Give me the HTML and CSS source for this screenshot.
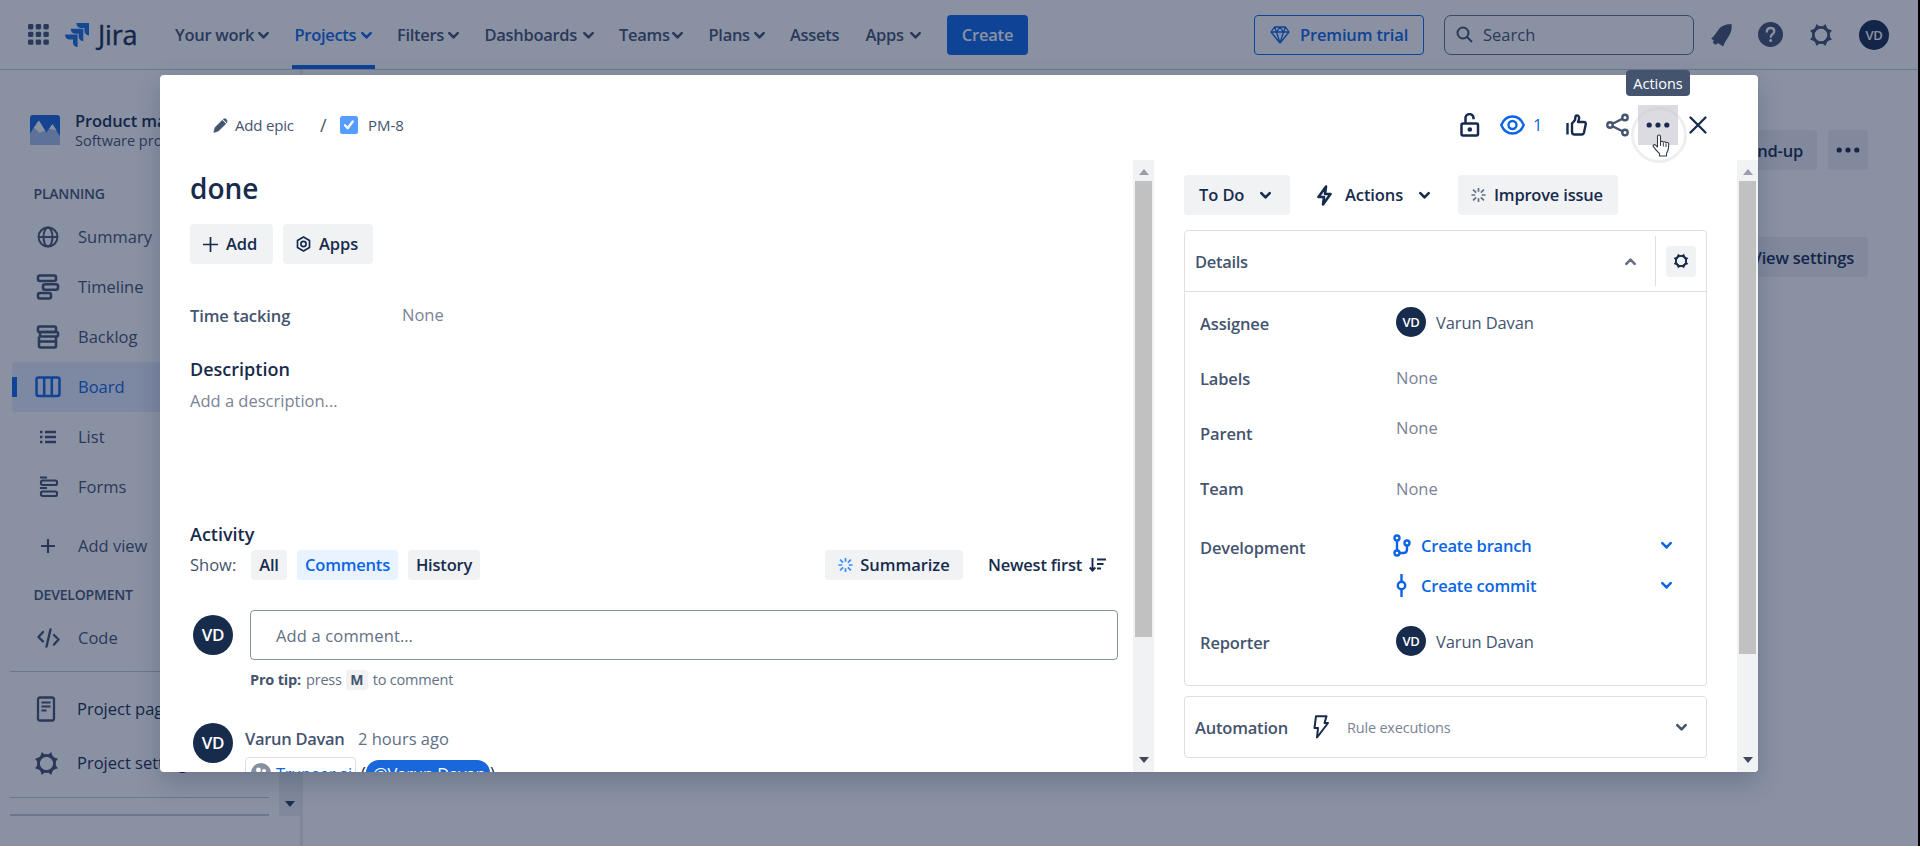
FILE: index.html
```html
<!DOCTYPE html>
<html lang="en">
<head>
    <meta charset="UTF-8">
    <meta name="viewport" content="width=device-width, initial-scale=1.0">
    <title>PM-8 done - Jira</title>
    <link rel="stylesheet" href="styles.css">
</head>
<body>
    <!-- shared icons -->
    <svg class="sprite" width="0" height="0">
        <symbol id="chevron" viewBox="0 0 10 8"><path d="M1.2 1.8 5 5.8l3.8-4" fill="none" stroke="currentColor" stroke-width="2.3" stroke-linecap="round" stroke-linejoin="round"/></symbol>
        <symbol id="gear" viewBox="0 0 24 24"><circle cx="12" cy="12" r="7.8" fill="none" stroke="currentColor" stroke-width="2.6"/><path d="M7.500 1l3 2.500h3l3-2.500 1.500 4 1 1 4 1.500-2.500 3v3l2.500 3-4 1.500-1 1-1.500 4-3-2.500h-3l-3 2.500-1.500-4-1-1-4-1.500 2.500-3v-3l-2.500-3 4-1.500 1-1zM12 5.500a6.500 6.500 0 1 0 0 13 6.500 6.500 0 0 0 0-13z" fill="currentColor" fill-rule="evenodd"/></symbol>
        <symbol id="spark" viewBox="0 0 16 16"><path d="M8 .5v4M8 11.500v4M.5 8h4M11.500 8h4M2.200 2.200l3.300 3.300M10.500 10.500l3.300 3.300M2.200 13.800l3.300-3.300M10.500 5.500l3.300-3.300" stroke="currentColor" stroke-width="1.800"/></symbol>
        <symbol id="dots" viewBox="0 0 24 6"><g fill="currentColor"><circle cx="3.2" cy="3" r="2.6"/><circle cx="12" cy="3" r="2.6"/><circle cx="20.8" cy="3" r="2.6"/></g></symbol>
        <symbol id="tri-up" viewBox="0 0 10 6"><path d="M5 0l5 6H0z" fill="currentColor"/></symbol>
        <symbol id="tri-down" viewBox="0 0 10 6"><path d="M0 0h10L5 6z" fill="currentColor"/></symbol>
    </svg>

    <div class="app">
        <header class="topnav">
            <svg class="switcher" width="21" height="21" viewBox="0 0 21 21" fill="currentColor"><rect width="5.4" height="5.4" rx="1.4"/><rect x="7.7" width="5.4" height="5.4" rx="1.4"/><rect x="15.4" width="5.4" height="5.4" rx="1.4"/><rect y="7.7" width="5.4" height="5.4" rx="1.4"/><rect x="7.7" y="7.7" width="5.4" height="5.4" rx="1.4"/><rect x="15.4" y="7.7" width="5.4" height="5.4" rx="1.4"/><rect y="15.4" width="5.4" height="5.4" rx="1.4"/><rect x="7.7" y="15.4" width="5.4" height="5.4" rx="1.4"/><rect x="15.4" y="15.4" width="5.4" height="5.4" rx="1.4"/></svg>
            <div class="logo">
                <svg width="24" height="24" viewBox="0 0 24 24" fill="#1d6fe0"><path d="M11.4 0H24v12.4c-2.800 0-4.600-1.800-4.600-4.600V5h-2.900c-3 0-5.100-2-5.100-5z"/><path d="M5.700 5.800h12.600v12.400c-2.800 0-4.600-1.800-4.600-4.600v-2.800h-2.900c-3 0-5.100-2-5.100-5z"/><path d="M0 11.600h12.600V24C9.800 24 8 22.200 8 19.400v-2.800H5.100c-3 0-5.100-2-5.100-5z"/></svg>
                <span>Jira</span>
            </div>
            <nav class="menu">
                <a class="w-work">Your work<svg class="chev"><use href="#chevron"/></svg></a>
                <a class="w-projects active">Projects<svg class="chev"><use href="#chevron"/></svg></a>
                <a class="w-filters">Filters<svg class="chev"><use href="#chevron"/></svg></a>
                <a class="w-dash">Dashboards<svg class="chev"><use href="#chevron"/></svg></a>
                <a class="w-teams">Teams<svg class="chev"><use href="#chevron"/></svg></a>
                <a class="w-plans">Plans<svg class="chev"><use href="#chevron"/></svg></a>
                <a class="w-assets">Assets</a>
                <a class="w-apps">Apps<svg class="chev"><use href="#chevron"/></svg></a>
            </nav>
            <button class="create">Create</button>
            <button class="premium">
                <svg width="20" height="18" viewBox="0 0 20 18" fill="none" stroke="currentColor" stroke-width="1.3" stroke-linejoin="round"><path d="M4.500 1h11L19 6l-9 11L1 6zM1 6h18M6.500 6L10 17l3.500-11M4.500 1l2 5L10 1l3.500 5 2-5"/></svg>
                Premium trial
            </button>
            <div class="search">
                <svg width="17" height="17" viewBox="0 0 17 17" fill="none" stroke="currentColor" stroke-width="2"><circle cx="7" cy="7" r="5.500"/><path d="M11 11l5 5"/></svg>
                <span>Search</span>
            </div>
            <div class="nav-icons">
                <svg width="21" height="24" viewBox="0 0 21 24" fill="currentColor"><path d="M20.500 1c-5 .2-10 1.500-12.500 5L2.500 13.500c-.6.800-1.500 1-2 1.700-.2.400 0 .7.500 1L11.500 23c.6.300 1 .1 1.200-.5.300-1 .4-2 1-2.800L18.500 12c2.200-3.500 2.500-7.500 2-11zM2.800 17.500a2.400 2.400 0 1 0 4 2.600z"/></svg>
                <svg width="25" height="25" viewBox="0 0 25 25"><circle cx="12.500" cy="12.500" r="12.500" fill="currentColor"/><path d="M8.800 9.700c0-2.200 1.600-3.700 3.800-3.700s3.700 1.400 3.700 3.300c0 2.800-3.500 2.800-3.500 5.500" fill="none" stroke="#fff" stroke-width="2.300" stroke-linecap="round"/><circle cx="12.700" cy="18.500" r="1.600" fill="#fff"/></svg>
                <svg width="24" height="24"><use href="#gear"/></svg>
                <span class="avatar av-30">VD</span>
            </div>
        </header>

        <div class="page">
            <aside class="sidebar">
                <div class="side-main">
                    <div class="project">
                        <svg width="30" height="30" viewBox="0 0 30 30"><rect width="30" height="30" rx="3" fill="#1868db"/><path d="M0 30V18.500L8 6l3 3.500L16 18l6-8L30 21v9z" fill="#a9c0e8"/><path d="M4 12.500L9 5.500l7 11.500-3-1-3 2-3-2.500zM19 14l3.500-5 4.500 7-3-1.500z" fill="#fff"/></svg>
                        <div>
                            <div class="project-name">Product management</div>
                            <div class="project-type">Software project</div>
                        </div>
                    </div>
                    <h3>PLANNING</h3>
                    <a class="side-item"><span class="ico"><svg width="22" height="22" viewBox="0 0 22 22" fill="none" stroke="currentColor" stroke-width="1.900"><circle cx="11" cy="11" r="9.500"/><ellipse cx="11" cy="11" rx="4.500" ry="9.500"/><path d="M2 11h18"/></svg></span>Summary</a>
                    <a class="side-item"><span class="ico"><svg width="24" height="26" viewBox="0 0 24 26" fill="none" stroke="currentColor" stroke-width="2.600"><rect x="2" y="1.500" width="18" height="5.500" rx="2"/><rect x="7" y="10.300" width="15" height="5.500" rx="2"/><rect x="2" y="19" width="13" height="5.500" rx="2"/></svg></span>Timeline</a>
                    <a class="side-item"><span class="ico"><svg width="24" height="24" viewBox="0 0 24 24" fill="none" stroke="currentColor" stroke-width="2.600"><rect x="2" y="1.500" width="18" height="5.500" rx="1.500"/><rect x="4" y="7" width="18" height="4.500" rx="1.500"/><path d="M3 11.500v9.500a1.500 1.500 0 0 0 1.500 1.500h14A1.500 1.500 0 0 0 20 21v-9.500M3 16.500h17"/></svg></span>Backlog</a>
                    <a class="side-item selected"><span class="ico"><svg width="26" height="22" viewBox="0 0 26 22" fill="none" stroke="currentColor" stroke-width="2.500"><rect x="1.500" y="1.500" width="23" height="18.500" rx="2"/><path d="M9.200 1.500V20M16.800 1.500V20"/></svg></span>Board</a>
                    <a class="side-item"><span class="ico"><svg width="16" height="16" viewBox="0 0 16 16" fill="none" stroke="currentColor" stroke-width="2.400"><path d="M0 3h2.500M5 3h11M0 8h2.500M5 8h11M0 13h2.500M5 13h11"/></svg></span>List</a>
                    <a class="side-item"><span class="ico"><svg width="19" height="22" viewBox="0 0 19 22" fill="none" stroke="currentColor" stroke-width="2.200"><path d="M1 1.500h7M1 12h7"/><rect x="2" y="4.500" width="16" height="4.500" rx="1.500"/><rect x="2" y="15.500" width="16" height="4.500" rx="1.500"/></svg></span>Forms</a>
                    <a class="side-item add-view"><span class="ico"><svg width="16" height="16" viewBox="0 0 16 16" stroke="currentColor" stroke-width="2.200"><path d="M8 1v14M1 8h14"/></svg></span>Add view</a>
                    <h3 class="dev">DEVELOPMENT</h3>
                    <a class="side-item"><span class="ico"><svg width="23" height="20" viewBox="0 0 23 20" fill="none" stroke="currentColor" stroke-width="2.400" stroke-linecap="round" stroke-linejoin="round"><path d="M6 4L1.500 9 6 13.500M13.500 1.500l-4 17M17 7l4.500 4.500L17 16.500"/></svg></span>Code</a>
                    <div class="side-bottom">
                        <a class="side-item dark"><span class="ico"><svg width="20" height="26" viewBox="0 0 20 26" fill="none" stroke="currentColor" stroke-width="2.300"><rect x="2" y="1.500" width="16" height="23" rx="2"/><path d="M5.500 6.500h9M5.500 10.500h9M5.500 14.500h5" stroke-width="2"/></svg></span>Project pages</a>
                        <a class="side-item dark"><span class="ico"><svg width="25" height="25"><use href="#gear"/></svg></span>Project settings</a>
                    </div>
                    <div class="side-end"></div>
                </div>
                <div class="side-scroll"><svg width="10" height="6"><use href="#tri-down"/></svg></div>
            </aside>
            <main class="board">
                <div class="board-row">
                    <button class="btn">Stand-up</button>
                    <button class="btn btn-dots"><svg width="24" height="6"><use href="#dots"/></svg></button>
                </div>
                <div class="board-row second">
                    <button class="btn">View settings</button>
                </div>
            </main>
        </div>
    </div>
    <div class="blanket"></div>
    <div class="screen-edge"></div>

    <section class="modal">
        <div class="modal-head">
            <div class="crumbs">
                <svg width="15" height="17" viewBox="0 0 15 15" fill="currentColor" stroke="currentColor" stroke-width=".6"><path d="M9.300 2.200l3.500 3.500-7.400 7.400-4.600 1.300 1.200-4.800zM10.200 1.300C11 .500 12.300.400 13.200 1.300s1 2.600.500 3.500z"/></svg>
                <span class="c-epic">Add epic</span>
                <span class="c-sep">/</span>
                <svg width="18" height="18" viewBox="0 0 18 18"><rect width="18" height="18" rx="2.500" fill="#579dff"/><path d="M5 9.300l2.700 2.900L12.700 5.500" fill="none" stroke="#fff" stroke-width="2.300" stroke-linecap="round" stroke-linejoin="round"/></svg>
                <span class="c-key">PM-8</span>
            </div>
            <div class="head-actions">
                <svg width="20" height="24" viewBox="0 0 20 24" fill="none" stroke="currentColor" stroke-width="2.500"><rect x="1.500" y="10.500" width="16.500" height="12" rx="1.500"/><path d="M5.500 10.500V5.500a4 4 0 0 1 8-.8v1.500"/><circle cx="9.800" cy="16.500" r="2.300" fill="currentColor" stroke="none"/></svg>
                <svg class="eye" width="25" height="20" viewBox="0 0 25 20" fill="none" stroke="currentColor" stroke-width="2.400"><path d="M1.300 10C3.500 4.500 7.500 1.500 12.500 1.500S21.500 4.500 23.700 10c-2.200 5.500-6.200 8.500-11.200 8.500S3.500 15.500 1.300 10z"/><circle cx="12.500" cy="10" r="4"/></svg>
                <span class="watch">1</span>
                <svg class="thumb" width="21" height="22" viewBox="0 0 21 22" fill="none" stroke="currentColor" stroke-width="2.400" stroke-linejoin="round"><path d="M1.500 9v11.500M6 9.500l3-3.500.500-3.500c.2-1.500 3-1.500 3.500.5.300 1.500-.2 3.500-1 5h6c1.500 0 2 1.200 1.700 2.500l-1.700 8c-.3 1.200-1 2-2.300 2H8.500C7 20.500 6 19.500 6 18z"/></svg>
                <svg class="share" width="24" height="24" viewBox="0 0 24 24" fill="none" stroke="#44546f" stroke-width="2.400"><circle cx="4" cy="12" r="2.700"/><circle cx="19" cy="4.500" r="2.700"/><circle cx="19" cy="19.500" r="2.700"/><path d="M6.500 10.800l10-5M6.500 13.200l10 5"/></svg>
                <button class="more"><svg width="24" height="6"><use href="#dots"/></svg></button>
                <svg class="close" width="18" height="18" viewBox="0 0 18 18" stroke="currentColor" stroke-width="2.300" stroke-linecap="round"><path d="M1.500 1.500l15 15M16.500 1.500l-15 15"/></svg>
            </div>
        </div>

        <div class="modal-body">
            <div class="left">
                <h1>done</h1>
                <div class="toolbar">
                    <button class="btn"><svg width="15" height="15" viewBox="0 0 15 15" stroke="currentColor" stroke-width="1.700"><path d="M7.500 0v15M0 7.500h15"/></svg>Add</button>
                    <button class="btn btn-apps"><svg width="15" height="16" viewBox="0 0 15 16" fill="none" stroke="currentColor" stroke-width="1.700"><path d="M7.500 1l6 3.500v7l-6 3.500-6-3.500v-7z" stroke-linejoin="round"/><circle cx="7.500" cy="8" r="2.600"/></svg>Apps</button>
                </div>
                <div class="time-row"><span class="label">Time tacking</span><span class="none">None</span></div>
                <h2 class="desc-title">Description</h2>
                <div class="desc">Add a description...</div>
                <h2 class="act-title">Activity</h2>
                <div class="show-row">
                    <span class="show">Show:</span>
                    <button class="chip c-all">All</button>
                    <button class="chip c-comments on">Comments</button>
                    <button class="chip c-history">History</button>
                    <button class="chip c-sum"><svg width="15" height="16"><use href="#spark"/></svg>Summarize</button>
                    <span class="newest">Newest first<svg width="17" height="14" viewBox="0 0 17 14" fill="none" stroke="currentColor" stroke-width="1.900"><path d="M3.500 0v12.500M.700 9.500l2.800 3 2.800-3M8 1.500h9M8 6h6.500M8 10.500h4"/></svg></span>
                </div>
                <div class="comment-new">
                    <span class="avatar av-40">VD</span>
                    <div class="comment-input">Add a comment…</div>
                </div>
                <div class="tip"><b>Pro tip:</b><span>press</span><kbd>M</kbd><span>to comment</span></div>
                <div class="comment">
                    <span class="avatar av-40">VD</span>
                    <div>
                        <div class="who"><b>Varun Davan</b><span>2 hours ago</span></div>
                        <div class="mentions">
                            <span class="tag"><svg width="20" height="20" viewBox="0 0 20 20"><circle cx="10" cy="10" r="10" fill="#8590a2"/><g fill="#fff"><circle cx="7.500" cy="7" r="2.400"/><circle cx="13" cy="8" r="1.900"/><path d="M3.500 14c0-4 8-4 8 0z"/></g></svg>Trupeer.ai</span>
                            <span class="paren">(</span><span class="mention">@Varun Davan</span><span>)</span>
                        </div>
                    </div>
                </div>
            </div>
            <div class="scrollbar sb-left">
                <svg class="up" width="10" height="6"><use href="#tri-up"/></svg>
                <div class="sb-thumb"></div>
                <svg class="down" width="10" height="6"><use href="#tri-down"/></svg>
            </div>

            <div class="right">
                <div class="status-row">
                    <button class="btn todo">To Do<svg class="chev"><use href="#chevron"/></svg></button>
                    <button class="act-btn"><svg width="15" height="21" viewBox="0 0 15 21" fill="none" stroke="currentColor" stroke-width="2.600" stroke-linejoin="round"><path d="M9 1.500L1.500 12H7l-1 7.500L13.500 9H8z"/></svg>Actions<svg class="chev"><use href="#chevron"/></svg></button>
                    <button class="btn improve"><svg width="15" height="16"><use href="#spark"/></svg>Improve issue</button>
                </div>
                <div class="details">
                    <div class="details-head">
                        <span>Details</span>
                        <svg class="chev flip"><use href="#chevron"/></svg>
                        <div class="cfg"><button><svg width="16" height="16"><use href="#gear"/></svg></button></div>
                    </div>
                    <dl>
                        <div class="field f-assignee"><dt>Assignee</dt><dd><span class="avatar av-30">VD</span><span class="person">Varun Davan</span></dd></div>
                        <div class="field f-labels"><dt>Labels</dt><dd class="empty">None</dd></div>
                        <div class="field f-parent"><dt>Parent</dt><dd class="empty">None</dd></div>
                        <div class="field f-team"><dt>Team</dt><dd class="empty">None</dd></div>
                        <div class="field f-dev"><dt>Development</dt>
                            <dd>
                                <a><svg width="18" height="23" viewBox="0 0 18 23" fill="none" stroke="currentColor" stroke-width="2.400"><circle cx="4" cy="4" r="2.500"/><circle cx="4" cy="19" r="2.500"/><circle cx="14" cy="9" r="2.500"/><path d="M4 6.600v9.800M6.500 19h4.500c2 0 3-2 3-4v-4"/></svg>Create branch<svg class="chev"><use href="#chevron"/></svg></a>
                                <a><svg width="18" height="23" viewBox="0 0 18 23" fill="none" stroke="currentColor" stroke-width="2.400"><circle cx="8.500" cy="11.500" r="3.700"/><path d="M8.500 0v7.800M8.500 15.200V23"/></svg>Create commit<svg class="chev"><use href="#chevron"/></svg></a>
                            </dd>
                        </div>
                        <div class="field f-reporter"><dt>Reporter</dt><dd><span class="avatar av-30">VD</span><span class="person">Varun Davan</span></dd></div>
                    </dl>
                </div>
                <div class="automation">
                    <b>Automation</b>
                    <svg width="16" height="24" viewBox="0 0 16 24" fill="none" stroke="currentColor" stroke-width="2" stroke-linejoin="round"><path d="M3 1.200h10.500L11.500 8H15L4 22.500 5 13H1.500z"/></svg>
                    <span>Rule executions</span>
                    <svg class="chev"><use href="#chevron"/></svg>
                </div>
            </div>
            <div class="scrollbar sb-right">
                <svg class="up" width="10" height="6"><use href="#tri-up"/></svg>
                <div class="sb-thumb"></div>
                <svg class="down" width="10" height="6"><use href="#tri-down"/></svg>
            </div>
        </div>
    </section>

    <div class="tooltip">Actions</div>
    <div class="click-ring"></div>
    <svg class="cursor" width="18" height="23" viewBox="0 0 18 23"><path d="M5.500 13V2.500c0-2 3-2 3 0V8c.5-1.200 2.500-1 2.800.3.600-.9 2.300-.7 2.600.5 1-.7 2.800-.3 2.800 1.200 0 5-.5 7-2.200 9.500V22H7.500v-2.500C5 17.500 3 14.500 1.300 12.700c-1-1.500 1-2.700 2.300-1.500z" fill="#fff" stroke="#333a48" stroke-width="1.100" stroke-linejoin="round"/><path d="M8.500 8v4M11.300 9v3.500M14 9.500V13" stroke="#333a48" stroke-width="1"/></svg>
</body>
</html>
```
FILE: styles.css
```css
* {
    box-sizing: border-box;
}
body {
    margin: 0;
    width: 1920px;
    height: 846px;
    overflow: hidden;
    position: relative;
    background: #fff;
    color: #172b4d;
    font-family: "Open Sans", "Noto Sans", sans-serif;
    font-size: 16.5px;
    line-height: 20px;
    white-space: nowrap;
}
h1, h2, h3, dl, dd {
    margin: 0;
}
button {
    font: inherit;
    color: inherit;
    border: none;
    padding: 0;
    display: flex;
    align-items: center;
}
svg {
    flex: none;
    display: block;
}
.sprite {
    position: absolute;
}
.chev {
    width: 11px;
    height: 9px;
}
.avatar {
    flex: none;
    display: flex;
    align-items: center;
    justify-content: center;
    border-radius: 50%;
    background: #172b4d;
    color: #fff;
    font-weight: 600;
}
.av-30 {
    width: 30px;
    height: 30px;
    font-size: 13px;
    letter-spacing: -0.3px;
}
.av-40 {
    width: 40px;
    height: 40px;
    font-size: 17px;
    letter-spacing: -0.3px;
}
.btn {
    height: 40px;
    border-radius: 4px;
    background: #f1f2f4;
    font-weight: 600;
    letter-spacing: -0.1px;
}

/* top navigation */
.app {
    height: 846px;
    display: flex;
    flex-direction: column;
}
.topnav {
    height: 70px;
    flex: none;
    display: flex;
    align-items: center;
    padding-left: 28px;
    border-bottom: 1px solid #c5cbd6;
    color: #44546f;
}
.logo {
    display: flex;
    align-items: center;
    gap: 9px;
    width: 126px;
    margin-left: 16px;
    color: #172b4d;
    font-size: 27px;
    letter-spacing: -0.2px;
    -webkit-text-stroke: 0.4px #172b4d;
}
.menu {
    display: flex;
    gap: 25.5px;
    height: 69px;
    margin-left: -16px;
    padding-top: 1px;
    font-weight: 600;
    letter-spacing: -0.3px;
}
.menu a {
    display: flex;
    align-items: center;
    justify-content: space-between;
}
.w-work { width: 94px; }
.w-projects { width: 77px; }
.w-filters { width: 62px; }
.w-dash { width: 109px; }
.w-teams { width: 64px; }
.w-plans { width: 56px; }
.w-assets { width: 50px; }
.w-apps { width: 55px; }
.menu .active {
    color: #0c66e4;
    background: linear-gradient(#0c66e4, #0c66e4) bottom / 100% 4px no-repeat;
    padding: 0 3px;
    margin: 0 -3px;
    width: 83px;
}
.create {
    width: 81px;
    height: 40px;
    margin-left: 26.500px;
    justify-content: center;
    border-radius: 4px;
    background: #0c66e4;
    color: #fff;
    font-weight: 600;
    letter-spacing: -0.2px;
}
.premium {
    width: 170px;
    height: 40px;
    margin-left: 226px;
    padding-left: 15px;
    gap: 10px;
    border: 1.500px solid #0c66e4;
    border-radius: 4px;
    background: none;
    color: #0c66e4;
    font-weight: 600;
    letter-spacing: -0.15px;
}
.search {
    width: 250px;
    height: 40px;
    margin-left: 20px;
    padding-left: 11px;
    display: flex;
    align-items: center;
    gap: 10px;
    border: 1.500px solid #626f86;
    border-radius: 7px;
}
.nav-icons {
    display: flex;
    align-items: center;
    margin-left: 17px;
}
.nav-icons svg + svg {
    margin-left: 26px;
}
.nav-icons .avatar {
    margin-left: 26px;
}

/* page behind the dialog */
.page {
    flex: 1;
    display: flex;
}
.sidebar {
    width: 303px;
    display: flex;
    border-right: 3px solid #ebecf0;
}
.side-main {
    width: 259px;
    margin-left: 10px;
    color: #44546f;
}
.project {
    display: flex;
    gap: 15px;
    height: 40px;
    margin: 40px 0 0 20px;
    padding-top: 5px;
}
.project > div {
    margin-top: -4px;
}
.project-name {
    color: #172b4d;
    font-weight: 600;
    line-height: 20px;
    letter-spacing: -0.1px;
}
.project-type {
    font-size: 14.500px;
    line-height: 20px;
}
.sidebar h3 {
    margin: 34px 0 0 23.500px;
    font-size: 14px;
    font-weight: 600;
    line-height: 20px;
    letter-spacing: -0.2px;
}
.side-item {
    display: flex;
    align-items: center;
    height: 50px;
    margin-left: 2px;
    padding-left: 21px;
    border-radius: 4px;
}
.sidebar h3 + .side-item {
    margin-top: 8px;
}
.ico {
    width: 30px;
    margin-right: 15px;
    display: flex;
    justify-content: center;
}
.selected {
    background: linear-gradient(#0c66e4, #0c66e4) left center / 5px 20px no-repeat #e5edfd;
    color: #0c66e4;
}
.add-view {
    margin-top: 9px;
}
.sidebar .dev {
    margin-top: 14px;
}
.sidebar .dev + .side-item {
    margin-top: 8px;
}
.side-bottom {
    height: 127px;
    margin-top: 8px;
    padding-top: 10px;
    border-top: 1px solid #c5cbd6;
    border-bottom: 1px solid #c5cbd6;
}
.side-bottom .side-item {
    margin-left: 0;
    height: 54px;
}
.side-bottom .ico {
    margin-right: 16px;
}
.dark {
    color: #172b4d;
}
.dark svg {
    color: #44546f;
}
.side-end {
    height: 18px;
    border-bottom: 2px solid #c5cbd6;
}
.side-scroll {
    width: 21px;
    height: 706px;
    margin: 40px 0 0 10px;
    padding-bottom: 9px;
    display: flex;
    align-items: flex-end;
    justify-content: center;
    background: #eceef2;
    color: #2c3e5d;
}
.board {
    flex: 1;
    padding: 60px 52px 0 0;
}
.board-row {
    display: flex;
    justify-content: flex-end;
    gap: 11px;
}
.board-row .btn {
    padding: 1px 14px 0;
    background: #eff0f4;
    letter-spacing: -0.2px;
}
.board-row .btn-dots {
    padding: 0 8px;
}
.second {
    margin-top: 67px;
}
.blanket {
    position: absolute;
    inset: 0;
    background: rgba(16, 30, 67, 0.49);
}
.screen-edge {
    position: absolute;
    top: 0;
    right: 0;
    width: 2px;
    height: 846px;
    background: #000;
}

/* issue dialog */
.modal {
    position: absolute;
    left: 160px;
    top: 75px;
    width: 1598px;
    height: 697px;
    overflow: hidden;
    background: #fff;
    border-radius: 4px;
    display: flex;
    flex-direction: column;
    box-shadow: 0 10px 26px rgba(9, 30, 66, 0.22);
}
.modal-head {
    height: 85px;
    flex: none;
    display: flex;
    justify-content: space-between;
    padding: 30px 51px 15px 53px;
}
.crumbs {
    display: flex;
    align-items: center;
    color: #44546f;
    font-size: 15px;
}
.c-epic {
    width: 85px;
    margin-left: 7px;
    letter-spacing: -0.2px;
}
.c-sep {
    width: 20px;
    font-size: 18px;
}
.c-key {
    margin-left: 10px;
}
.head-actions {
    display: flex;
    align-items: center;
    color: #172b4d;
}
.eye {
    margin-left: 20px;
    color: #0c66e4;
}
.watch {
    width: 33px;
    padding-left: 8px;
    color: #0c66e4;
}
.thumb {
    margin-left: 8px;
}
.share {
    margin-left: 19px;
}
.more {
    width: 40px;
    height: 40px;
    margin-left: 8px;
    justify-content: center;
    background: #dcdbe2;
}
.close {
    margin-left: 11px;
}
.modal-body {
    flex: 1;
    display: flex;
}
.left {
    width: 973px;
    height: 612px;
    padding: 0 15px 0 30px;
}
h1 {
    padding-top: 10px;
    font-size: 28px;
    line-height: 36px;
    font-weight: 600;
}
.toolbar {
    display: flex;
    gap: 10px;
    margin-top: 18px;
}
.toolbar .btn {
    width: 83px;
    padding-left: 13px;
    gap: 8px;
}
.toolbar .btn-apps {
    width: 90px;
}
.time-row {
    display: flex;
    height: 20px;
    margin-top: 41px;
}
.label {
    width: 212px;
    padding-top: 1px;
    color: #44546f;
    font-weight: 600;
    letter-spacing: -0.1px;
}
.none, .desc, .empty {
    color: #7a8396;
}
h2 {
    font-size: 18px;
    font-weight: 600;
    line-height: 22px;
}
.desc-title {
    margin-top: 33px;
}
.desc {
    margin-top: 11px;
}
.act-title {
    margin-top: 112px;
}
.show-row {
    display: flex;
    align-items: center;
    margin-top: 5px;
}
.show {
    width: 61px;
    color: #44546f;
}
.chip {
    height: 30px;
    justify-content: center;
    border-radius: 4px;
    background: #f1f2f4;
    font-weight: 600;
    letter-spacing: -0.2px;
}
.c-all { width: 36px; }
.c-comments { width: 101px; margin-left: 10px; }
.c-history { width: 72px; margin-left: 10px; }
.c-sum {
    width: 138px;
    margin-left: 345px;
    gap: 7px;
    letter-spacing: -0.05px;
}
.c-sum svg {
    color: #388bff;
}
.chip.on {
    background: #e9f2ff;
    color: #0c66e4;
}
.newest {
    display: flex;
    align-items: center;
    justify-content: space-between;
    width: 118px;
    margin-left: 25px;
    font-weight: 600;
    letter-spacing: -0.2px;
}
.comment-new {
    display: flex;
    gap: 17px;
    margin-top: 30px;
    padding-left: 3px;
    height: 50px;
}
.comment-new .avatar {
    margin-top: 5px;
}
.comment-input {
    flex: 1;
    padding: 15px 0 0 25px;
    border: 1.500px solid #8590a2;
    border-radius: 4px;
    color: #626f86;
    letter-spacing: 0.15px;
}
.tip {
    display: flex;
    align-items: center;
    height: 20px;
    margin: 10px 0 0 60px;
    color: #626f86;
    font-size: 14.500px;
    letter-spacing: -0.2px;
}
.tip b {
    width: 56px;
    color: #44546f;
    letter-spacing: -0.2px;
}
kbd {
    width: 22px;
    height: 20px;
    margin: 0 5px 0 4px;
    border-radius: 3px;
    background: #f1f2f4;
    text-align: center;
    font: bold 14px/20px "Open Sans", sans-serif;
    color: #44546f;
}
.comment {
    display: flex;
    gap: 12px;
    margin-top: 33px;
    padding-left: 3px;
}
.who {
    display: flex;
    padding-top: 6px;
    color: #626f86;
}
.who b {
    width: 113px;
    color: #44546f;
    font-weight: 600;
    letter-spacing: -0.3px;
}
.mentions {
    display: flex;
    align-items: flex-start;
    margin-top: 8px;
    line-height: 32px;
}
.tag {
    display: flex;
    align-items: center;
    gap: 5px;
    width: 111px;
    height: 34px;
    padding: 0 0 0 5px;
    border: 1.500px solid #dcdfe4;
    border-radius: 4px;
    color: #0c66e4;
    letter-spacing: -0.3px;
}
.tag svg {
    margin-top: -3px;
}
.paren {
    margin: 0 0 0 5px;
}
.mention {
    width: 124px;
    height: 27px;
    margin-top: 3px;
    padding-left: 7px;
    border-radius: 13px;
    background: #1868db;
    color: #fff;
    line-height: 28px;
    letter-spacing: -0.1px;
}
.scrollbar {
    width: 21px;
    flex: none;
    display: flex;
    flex-direction: column;
    align-items: center;
    padding: 9px 0;
    background: #f1f2f4;
}
.sb-thumb {
    width: 17px;
    height: 456px;
    margin-top: 6px;
    background: #c1c1c1;
}
.up {
    color: #9a9dab;
}
.down {
    margin-top: auto;
    color: #44475c;
}
.sb-right .sb-thumb {
    height: 473px;
}
.right {
    flex: 1;
    padding: 15px 30px 0 30px;
}
.status-row {
    display: flex;
}
.todo {
    width: 106px;
    padding: 0 19px 0 15px;
    justify-content: space-between;
}
.act-btn {
    width: 113px;
    margin-left: 27px;
    background: none;
    font-weight: 600;
    letter-spacing: -0.1px;
}
.act-btn svg:first-child {
    margin-right: 13px;
}
.act-btn .chev {
    margin-left: auto;
}
.improve {
    width: 160px;
    margin-left: 28px;
    padding-left: 13px;
    gap: 8px;
    letter-spacing: -0.2px;
}
.improve svg {
    color: #626f86;
}
.details {
    height: 456px;
    margin-top: 15px;
    border: 1.500px solid #dcdfe4;
    border-radius: 4px;
}
.details-head {
    height: 61px;
    display: flex;
    align-items: center;
    padding-left: 10px;
    border-bottom: 1.500px solid #dcdfe4;
    color: #44546f;
    font-weight: 600;
    letter-spacing: -0.3px;
}
.details-head span {
    padding-top: 2px;
}
.flip {
    transform: scaleY(-1);
    margin-left: auto;
    color: #626f86;
}
.cfg {
    height: 50px;
    width: 51px;
    margin-left: 19px;
    display: flex;
    align-items: center;
    padding-left: 10px;
    border-left: 1.500px solid #dcdfe4;
}
.cfg button {
    width: 30px;
    height: 31px;
    justify-content: center;
    border-radius: 4px;
    background: #f1f2f4;
    color: #172b4d;
}
.field {
    display: flex;
    padding-left: 15px;
}
dt {
    width: 196px;
    padding-top: 1px;
    color: #44546f;
    font-weight: 600;
    letter-spacing: -0.15px;
}
dd {
    flex: 1;
    display: flex;
    color: #44546f;
}
dd.empty {
    color: #7a8396;
}
.f-assignee, .f-reporter {
    height: 30px;
    align-items: center;
}
.f-assignee dd, .f-reporter dd {
    align-items: center;
    gap: 10px;
}
.person {
    padding-top: 2px;
    letter-spacing: -0.1px;
}
.f-assignee { margin-top: 15px; }
.f-labels { margin-top: 31px; height: 20px; }
.f-parent { margin-top: 35px; height: 20px; }
.f-parent dd { margin-top: -5px; }
.f-team { margin-top: 35px; height: 20px; }
.f-team dd { margin-top: 1px; }
.f-dev { margin-top: 36px; }
.f-dev dt { padding-top: 4px; }
.f-dev dd {
    flex-direction: column;
    gap: 17px;
    margin-left: -3px;
    color: #0c66e4;
    font-weight: 600;
    letter-spacing: -0.2px;
}
.f-dev a {
    display: flex;
    align-items: center;
    height: 23px;
    padding-right: 34px;
}
.f-dev a svg:first-child {
    margin-right: 10px;
}
.f-dev .chev {
    margin-left: auto;
}
.f-reporter { margin-top: 29px; }
.f-assignee dt, .f-reporter dt {
    padding-top: 3px;
}
.automation {
    height: 62px;
    margin-top: 10px;
    padding: 0 19px 0 10px;
    display: flex;
    align-items: center;
    border: 1.500px solid #dcdfe4;
    border-radius: 4px;
    color: #44546f;
}
.automation b {
    width: 118px;
    padding-top: 2px;
    font-weight: 600;
    letter-spacing: -0.2px;
}
.automation svg:not(.chev) {
    color: #172b4d;
}
.automation span {
    margin-left: 18px;
    padding-top: 2px;
    color: #7a8396;
    font-size: 14.500px;
    letter-spacing: -0.2px;
}
.automation .chev {
    margin-left: auto;
}

/* pointer and tooltip */
.tooltip {
    position: absolute;
    left: 1626px;
    top: 70px;
    width: 64px;
    height: 26px;
    border-radius: 4px;
    background: #44546f;
    color: #fff;
    font-size: 14.500px;
    line-height: 27px;
    text-align: center;
}
.click-ring {
    position: absolute;
    left: 1631px;
    top: 107px;
    width: 56px;
    height: 56px;
    border: 3px solid rgba(200, 200, 205, 0.3);
    border-radius: 50%;
}
.cursor {
    position: absolute;
    left: 1652px;
    top: 134px;
}
```
